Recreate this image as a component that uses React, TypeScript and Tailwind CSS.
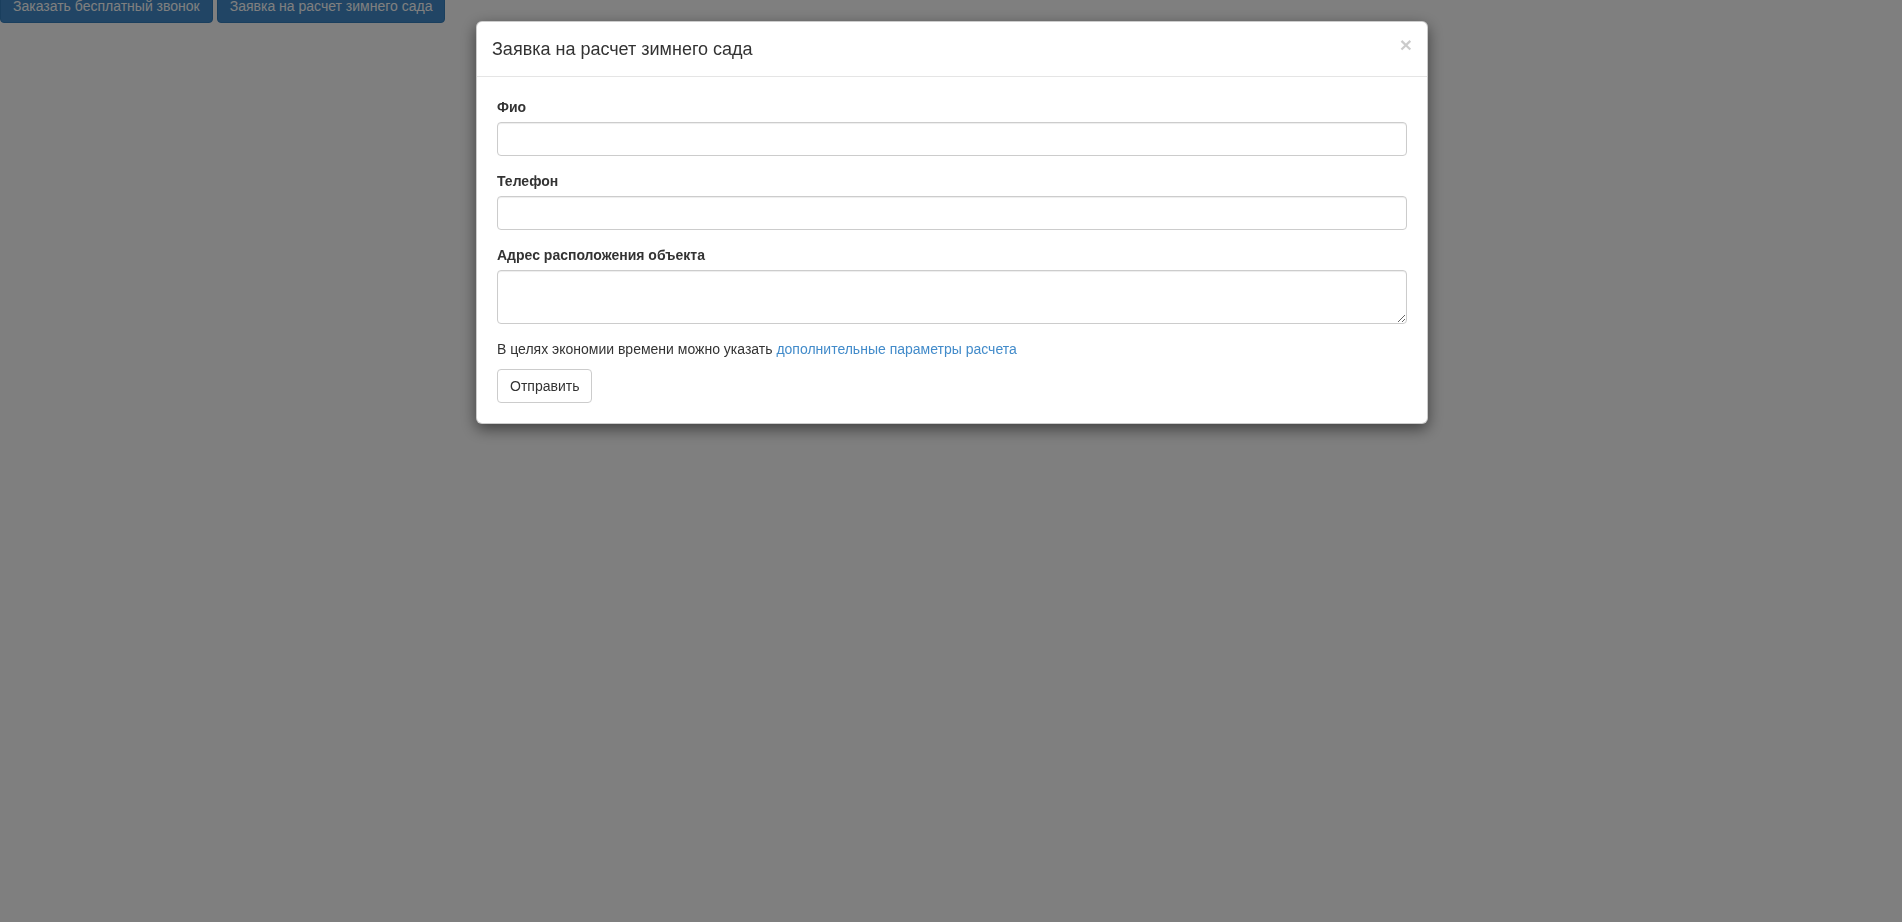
import React from 'react'

const font = { fontFamily: '"Liberation Sans", Arial, sans-serif' }

function Field({ label, area }: { label: string; area?: boolean }) {
  const cls =
    'block w-full rounded-[4px] border border-[#ccc] bg-white px-3 py-[6px] text-sm leading-5 text-[#555] shadow-[inset_0_1px_1px_rgba(0,0,0,0.075)] outline-none'
  return (
    <div className="mb-[15px]">
      <label className="mb-[5px] inline-block text-sm font-bold leading-5 text-[#333]">{label}</label>
      {area ? (
        <textarea rows={2} className={cls + ' h-[54px] resize-y'} />
      ) : (
        <input type="text" className={cls + ' h-[34px]'} />
      )}
    </div>
  )
}

export default function App() {
  return (
    <div className="relative min-h-screen bg-white text-sm leading-5 text-[#333]" style={font}>
      {/* page buttons, under the backdrop */}
      <div className="-mt-[11px] flex gap-1">
        <button className="rounded-[4px] border border-[#357ebd] bg-[#428bca] px-3 py-[6px] text-sm leading-5 text-white">
          Заказать бесплатный звонок
        </button>
        <button className="rounded-[4px] border border-[#357ebd] bg-[#428bca] px-3 py-[6px] text-sm leading-5 text-white">
          Заявка на расчет зимнего сада
        </button>
      </div>

      {/* backdrop */}
      <div className="fixed inset-0 bg-black/50" />

      {/* modal */}
      <div className="fixed inset-0 overflow-auto">
        <div className="mt-[21px] ml-[476px] w-[952px]">
          <div className="rounded-md border border-black/20 bg-white shadow-[0_5px_15px_rgba(0,0,0,0.5)]">
            <div className="flex items-start justify-between border-b border-[#e5e5e5] p-[15px]">
              <h4 className="m-0 text-lg leading-6 font-normal text-[#333]">Заявка на расчет зимнего сада</h4>
              <button className="-mt-[3px] text-[21px] leading-none font-bold text-black opacity-20">×</button>
            </div>
            <div className="p-5">
              <Field label="Фио" />
              <Field label="Телефон" />
              <Field label="Адрес расположения объекта" area />
              <p className="mb-[10px]">
                В целях экономии времени можно указать{' '}
                <a href="#" className="text-[#428bca]">дополнительные параметры расчета</a>
              </p>
              <button className="h-[34px] rounded-[4px] border border-[#ccc] bg-white px-3 py-[6px] text-sm leading-5 text-[#333]">
                Отправить
              </button>
            </div>
          </div>
        </div>
      </div>
    </div>
  )
}
